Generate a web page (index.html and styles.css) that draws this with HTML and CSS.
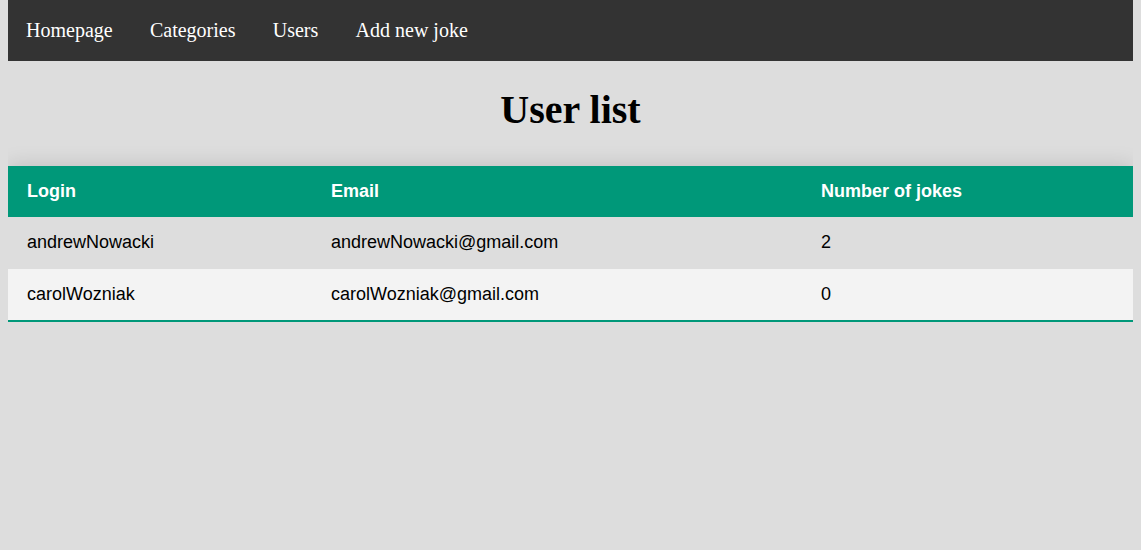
FILE: index.html
```html
<!DOCTYPE html>
<html lang="en">
<head>
<meta charset="utf-8">
<title>User list</title>
<link rel="stylesheet" href="styles.css">
</head>
<body>
<nav class="topnav">
  <a href="#" class="nav-link">Homepage</a>
  <a href="#" class="nav-link">Categories</a>
  <a href="#" class="nav-link">Users</a>
  <a href="#" class="nav-link">Add new joke</a>
</nav>
<h1 class="page-title">User list</h1>
<table class="styled-table">
  <thead>
    <tr>
      <th class="col-login">Login</th>
      <th class="col-email">Email</th>
      <th class="col-jokes">Number of jokes</th>
    </tr>
  </thead>
  <tbody>
    <tr>
      <td>andrewNowacki</td>
      <td>andrewNowacki@gmail.com</td>
      <td>2</td>
    </tr>
    <tr>
      <td>carolWozniak</td>
      <td>carolWozniak@gmail.com</td>
      <td>0</td>
    </tr>
  </tbody>
</table>
</body>
</html>
```

FILE: styles.css
```css
html, body {
  background: #dddddd;
}
body {
  margin: 0 8px;
  font-family: "Liberation Serif", "Times New Roman", serif;
}
.topnav {
  display: flex;
  background: #333333;
  height: 61px;
  align-items: center;
}
.nav-link {
  color: #ffffff;
  text-decoration: none;
  font-size: 20px;
  padding: 0 19.3px 0 18px;
}
.page-title {
  font-size: 40px;
  font-weight: bold;
  text-align: center;
  margin: 26px 0 0;
  line-height: 46px;
}
.styled-table {
  width: 100%;
  table-layout: fixed;
  border-collapse: collapse;
  margin-top: 33px;
  font-family: "Liberation Sans", Arial, sans-serif;
  font-size: 18px;
  box-shadow: 0 0 20px rgba(0, 0, 0, 0.15);
}
.styled-table thead tr {
  background: #009879;
  color: #ffffff;
  text-align: left;
}
.styled-table th,
.styled-table td {
  padding: 15px 18px 15px 19px;
  line-height: 21px;
  box-sizing: border-box;
}
.col-login { width: 304px; }
.col-email { width: 490px; }
.col-jokes { width: auto; }
.styled-table tbody tr {
  border-bottom: 1px solid #dddddd;
}
.styled-table tbody tr:nth-of-type(even) {
  background: #f3f3f3;
}
.styled-table tbody tr:last-of-type {
  border-bottom: 2px solid #009879;
}
```
